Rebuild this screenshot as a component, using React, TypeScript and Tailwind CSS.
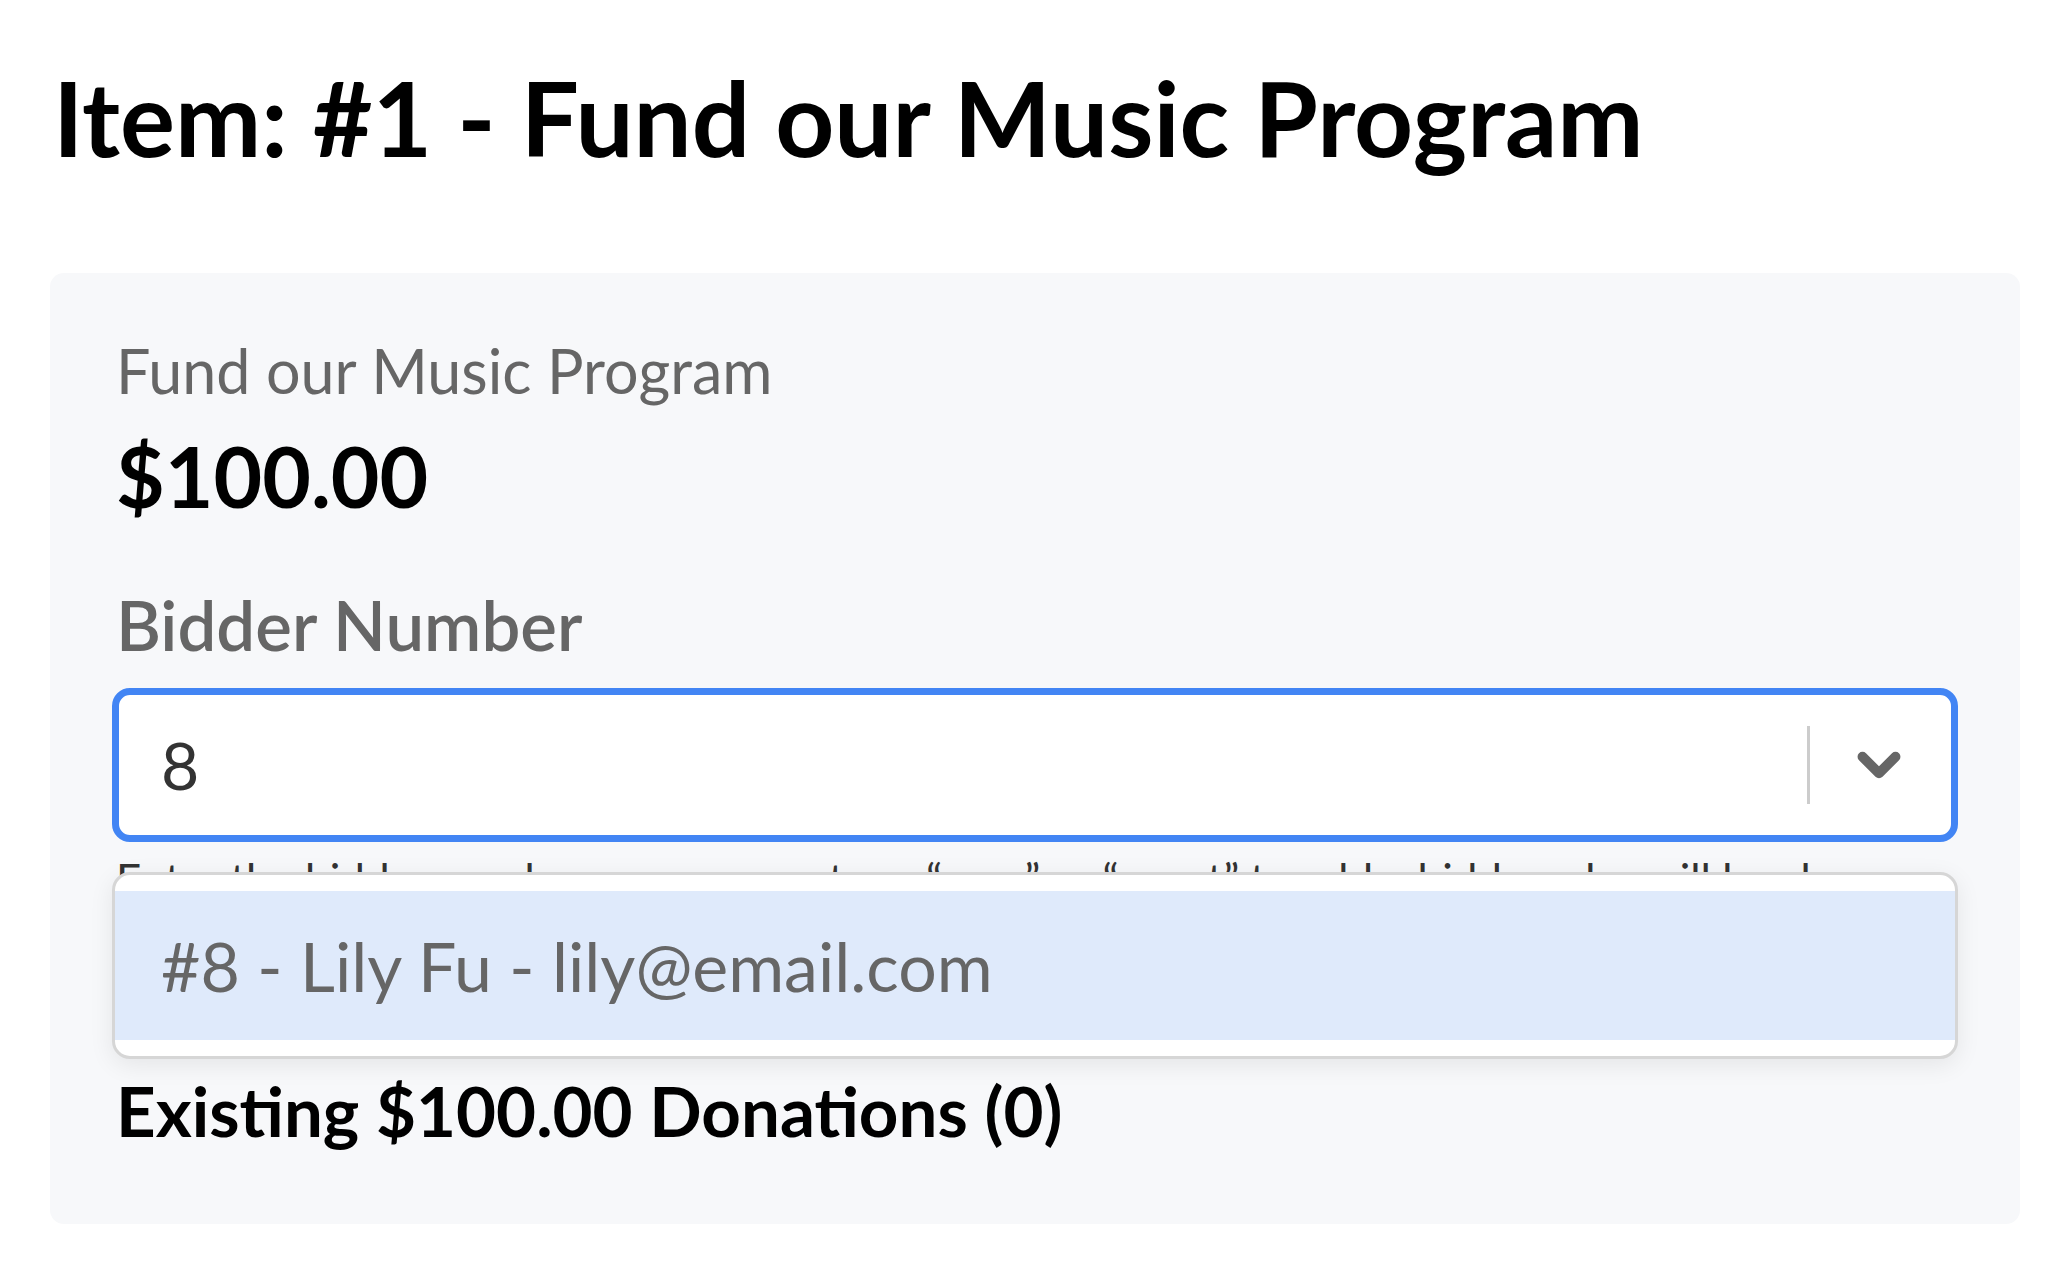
import { ChevronDown } from 'lucide-react';

const font = { fontFamily: 'Lato, "Liberation Sans", sans-serif' };

export default function App() {
    return (
        <div className="min-h-screen bg-white px-[50px] pt-[66px] text-black" style={font}>
            <h1 className="ml-[3px] text-[103px] font-bold leading-none">Item: #1 - Fund our Music Program</h1>

            <section className="mt-[104px] h-[951px] rounded-[14px] bg-[#f7f8fa] px-[62px] pt-[67px]">
                <p className="pl-1 text-[61px] leading-none text-[#666]">Fund our Music Program</p>
                <p className="mt-[33px] pl-1 text-[84px] font-bold leading-none">$100.00</p>

                <label className="mt-[72px] block pl-1 text-[69px] font-semibold leading-none text-[#666]">Bidder Number</label>

                <div className="relative">
                    <div className="mt-[29px] flex h-[154px] items-center rounded-[18px] border-[7px] border-[#4285f4] bg-white">
                        <span className="flex-1 pl-[42px] text-[66px] leading-none text-[#333]">8</span>
                        <span className="h-[78px] w-[3px] bg-[#cccccc]" />
                        <ChevronDown className="mr-[39px] ml-[36px] h-[66px] w-[66px] text-[#666]" strokeWidth={3.6} />
                    </div>

                    <p className="mt-[15px] pl-1 text-[44px] leading-none text-[#333]">
                        Enter the bidder number or name, or type “new” or “guest” to add a bidder who will be shown for this item.
                    </p>

                    <div className="absolute top-[184px] right-0 left-0 rounded-[18px] border-[3px] border-[#d6d6d6] bg-white py-[16px] shadow-[0_6px_24px_rgba(0,0,0,0.08)]">
                        <div className="flex h-[149px] items-center bg-[#dfeafb] pl-[46px] text-[68px] leading-none text-[#666]">
                            #8 - Lily Fu - lily@email.com
                        </div>
                    </div>
                </div>

                <h2 className="mt-[131px] pl-1 text-[69px] font-bold leading-none">Existing $100.00 Donations (0)</h2>
            </section>
        </div>
    );
}
